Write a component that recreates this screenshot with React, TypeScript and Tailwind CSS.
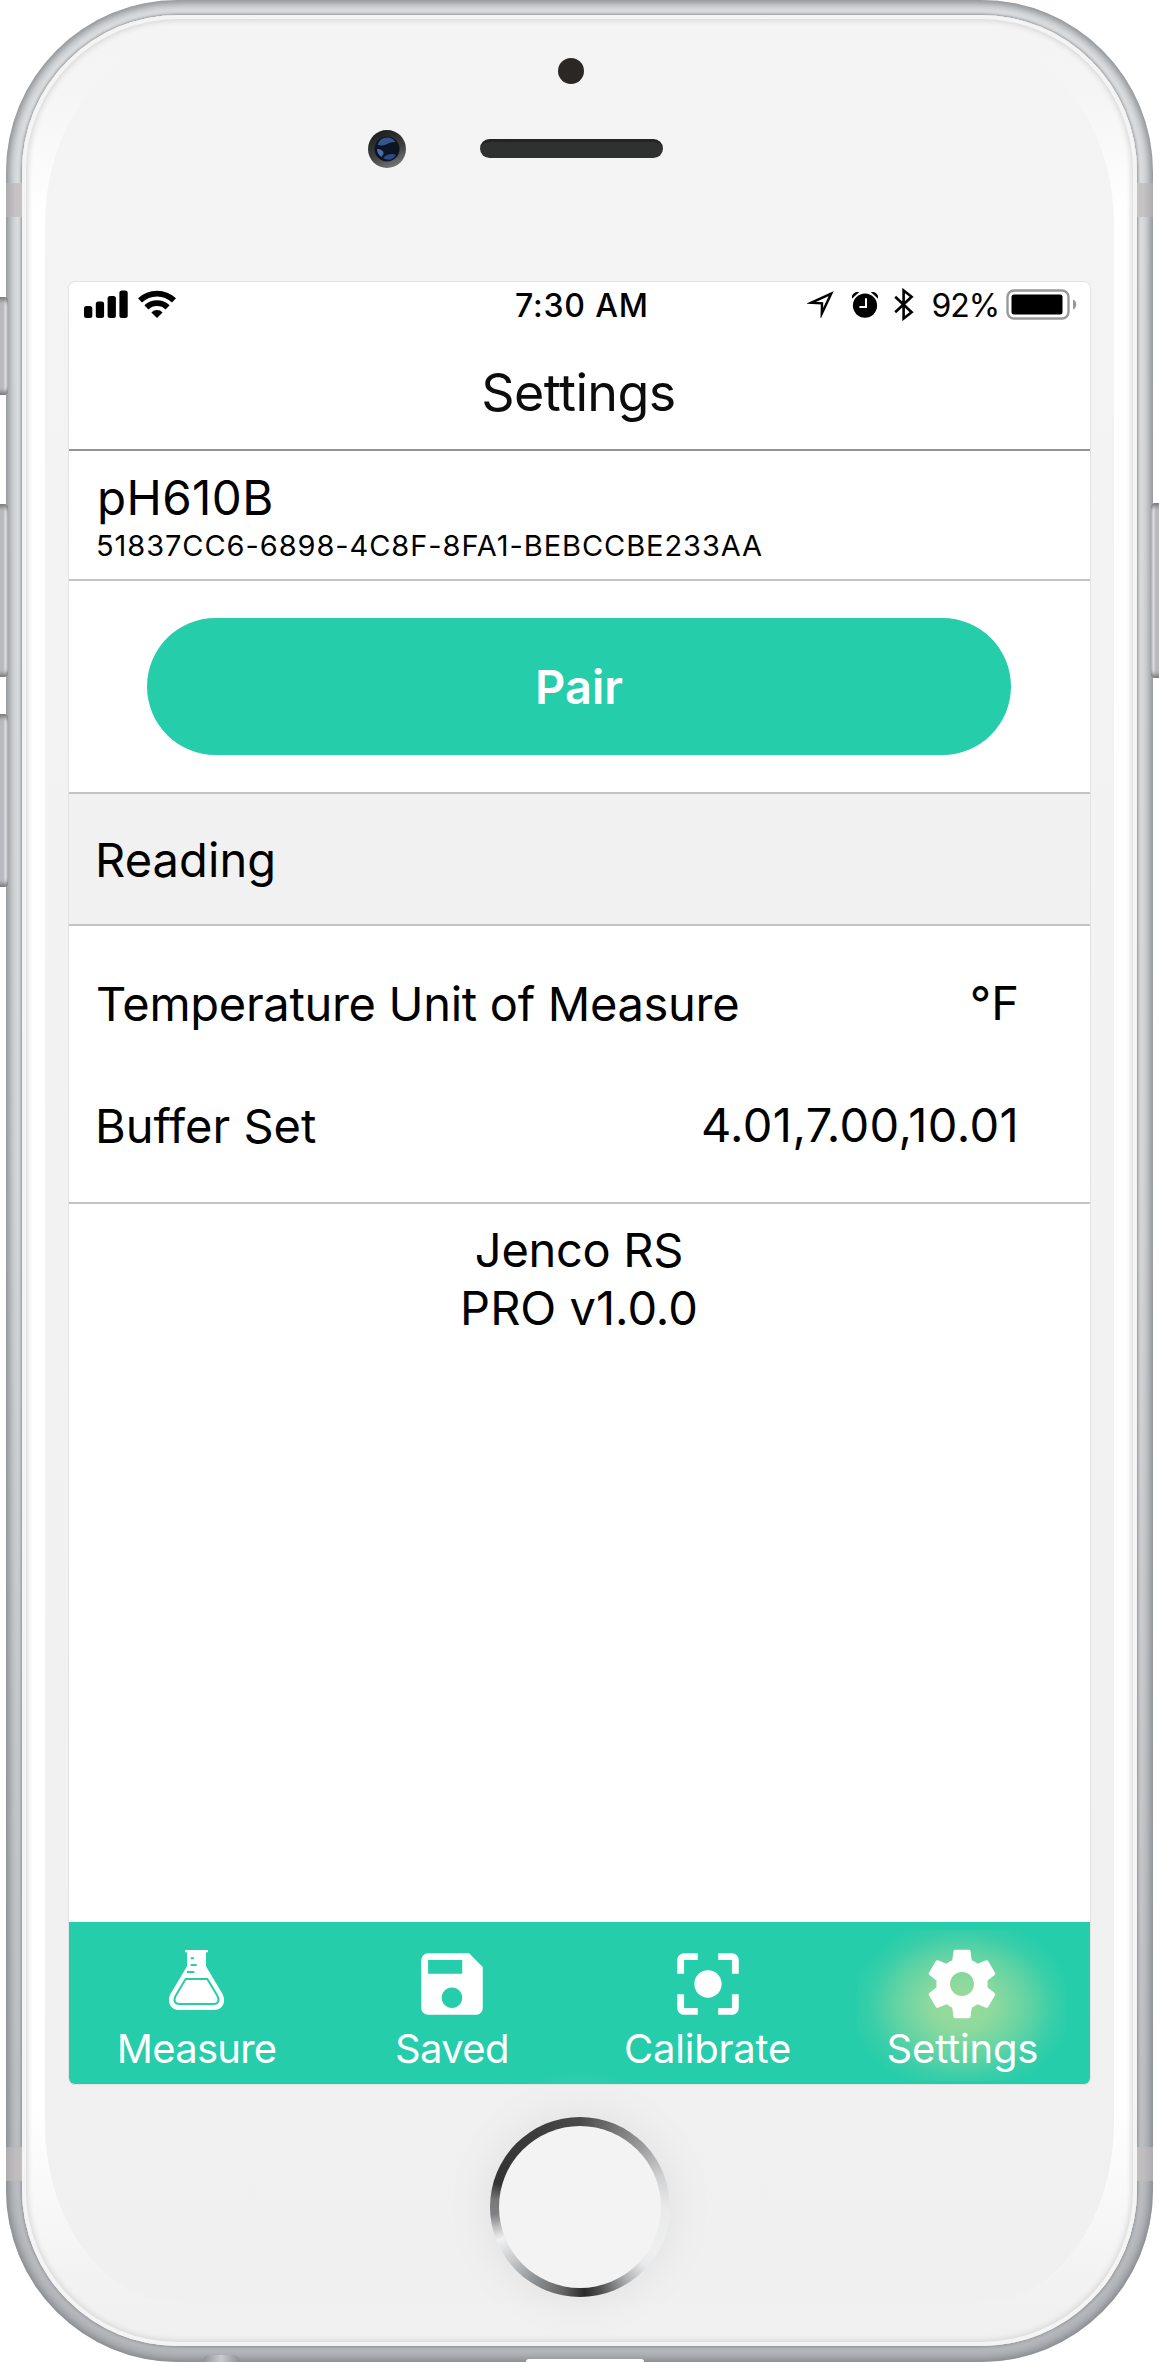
import React from 'react';
import { MdSave, MdCenterFocusStrong } from 'react-icons/md';

function SignalIcon() {
  return (
    <svg className="h-[28px] w-[44px]" viewBox="0 0 44 28" fill="#000">
      <rect x="0" y="16" width="8.3" height="12" rx="2.5" />
      <rect x="11.8" y="11.5" width="8.3" height="16.5" rx="2.5" />
      <rect x="23.6" y="6" width="8.3" height="22" rx="2.5" />
      <rect x="35.4" y="0.5" width="8.3" height="27.5" rx="2.5" />
    </svg>
  );
}

function WifiIcon() {
  return (
    <svg className="h-[28px] w-[38px]" viewBox="0 0 38 28" fill="none" stroke="#000" strokeWidth="5.8">
      <path d="M2 10.4a24.6 24.6 0 0 1 34 0" />
      <path d="M8.4 17.4a15.4 15.4 0 0 1 21.2 0" />
      <path d="M19 28l-5.6-5.6a8 8 0 0 1 11.2 0z" fill="#000" stroke="none" />
    </svg>
  );
}

function LocationIcon() {
  return (
    <svg className="h-[27px] w-[27px]" viewBox="0 0 27 27" fill="none" stroke="#000" strokeWidth="2.4">
      <path d="M24.2 2.6L4 11.8l11 .6-.2 10.2z" strokeMiterlimit="6" />
    </svg>
  );
}

function AlarmIcon() {
  return (
    <svg className="h-[26px] w-[26px]" viewBox="0 0 26 26">
      <circle cx="13" cy="13.6" r="12.1" fill="#000" />
      <path d="M0.4 5.6A5 5 0 0 1 5.8.6z" fill="#000" stroke="#000" strokeWidth="1.2" />
      <path d="M25.6 5.6A5 5 0 0 0 20.2.6z" fill="#000" stroke="#000" strokeWidth="1.2" />
      <path d="M14 6.2v8.8H7.4" fill="none" stroke="#fff" strokeWidth="2" />
    </svg>
  );
}

function BluetoothIcon() {
  return (
    <svg className="h-[33px] w-[20px]" viewBox="0 0 20 33" fill="none" stroke="#000" strokeWidth="2.6">
      <path d="M1.2 8.8l16.4 15.4-8 6.3V2.5l8 6.3L1.2 24.2" />
    </svg>
  );
}

function BatteryIcon() {
  return (
    <svg className="h-[31px] w-[71px]" viewBox="0 0 71 31">
      <rect x="1.5" y="1.5" width="61" height="28" rx="6.5" fill="none" stroke="#999" strokeWidth="2.4" />
      <rect x="5.5" y="5.5" width="51" height="20" rx="2.5" fill="#000" />
      <path d="M67 10.5c4.4 1.8 4.4 8.2 0 10z" fill="#999" />
    </svg>
  );
}

function FlaskIcon() {
  return (
    <svg className="h-[60px] w-[55px]" viewBox="0 0 165 180">
      <path
        fill="#fff"
        d="M48 0h69v7h-6v42l50 84c11 22 0 47-25 47H29C4 180-7 155 4 133l50-84V7h-6z"
      />
      <path
        fill="none"
        stroke="#26cdab"
        strokeWidth="6"
        d="M50 87h65l30 50c8 15 2 25-10 25H30c-12 0-18-10-10-25z"
      />
      <path stroke="#26cdab" strokeWidth="6" d="M65 25h10M65 45h18M54 66h22" />
    </svg>
  );
}

function GearIcon() {
  return (
    <svg className="size-[82px]" viewBox="0 0 24 24" fill="#fff">
      <path d="M19.43 12.98c.04-.32.07-.64.07-.98s-.03-.66-.07-.98l2.11-1.65c.19-.15.24-.42.12-.64l-2-3.46c-.12-.22-.39-.3-.61-.22l-2.49 1c-.52-.4-1.08-.73-1.69-.98l-.38-2.65C14.46 2.18 14.25 2 14 2h-4c-.25 0-.46.18-.49.42l-.38 2.65c-.61.25-1.17.59-1.69.98l-2.49-1c-.23-.09-.49 0-.61.22l-2 3.46c-.13.22-.07.49.12.64l2.11 1.65c-.04.32-.07.65-.07.98s.03.66.07.98l-2.11 1.65c-.19.15-.24.42-.12.64l2 3.46c.12.22.39.3.61.22l2.49-1c.52.4 1.08.73 1.69.98l.38 2.65c.03.24.24.42.49.42h4c.25 0 .46-.18.49-.42l.38-2.65c.61-.25 1.17-.59 1.69-.98l2.49 1c.23.09.49 0 .61-.22l2-3.46c.12-.22.07-.49-.12-.64l-2.11-1.65zM12 15.5c-1.93 0-3.5-1.57-3.5-3.5s1.57-3.5 3.5-3.5 3.5 1.57 3.5 3.5-1.57 3.5-3.5 3.5z" />
    </svg>
  );
}

function CameraLens() {
  return (
    <svg className="size-[38px]" viewBox="0 0 38 38">
      <defs>
        <linearGradient id="lens" x1="0.3" y1="0" x2="0.7" y2="1">
          <stop offset="0" stopColor="#1c1d1f" />
          <stop offset="0.55" stopColor="#3d3e40" />
          <stop offset="1" stopColor="#77797b" />
        </linearGradient>
      </defs>
      <circle cx="19" cy="19" r="19" fill="url(#lens)" />
      <circle cx="19" cy="19" r="12.5" fill="#0d1422" />
      <path d="M9.5 15a10 10 0 0 1 18-3c-6-1-10 5-18 3z" fill="#35558f" />
      <path d="M9 19c4 0 7 2 6.5 5l-2 3c-3-2-4.5-5-4.5-8z" fill="#4470b3" />
      <path d="M15 28c3-3.5 9-5 13-3-3 5-8 6-13 3z" fill="#2b4a86" />
    </svg>
  );
}

function Divider() {
  return <div className="h-[2px] shrink-0 bg-[#c3c4c4]" />;
}

function StatusBar() {
  return (
    <div className="flex h-[47px] shrink-0 items-center pr-[13px] pl-[15px]">
      <div className="flex w-[431px] items-center gap-[10px] pb-[3px]">
        <SignalIcon />
        <WifiIcon />
      </div>
      <div className="w-[160px] text-[32px] leading-none font-medium tracking-[0.8px]">7:30 AM</div>
      <div className="flex flex-1 items-center justify-end">
        <div className="pb-[2px]"><LocationIcon /></div>
        <div className="ml-[18px] pb-[2px]"><AlarmIcon /></div>
        <div className="ml-[16px] pb-[2px]"><BluetoothIcon /></div>
        <div className="ml-[18px] text-[32px] leading-none tracking-[-1.1px]">92%</div>
        <div className="ml-[7px] pb-[2px]"><BatteryIcon /></div>
      </div>
    </div>
  );
}

function SettingRow({ label, value, labelClass, valueClass }: { label: string; value: string; labelClass: string; valueClass: string }) {
  return (
    <div className="flex h-[122px] items-center justify-between pr-[71px] pl-[26px] text-[47px] leading-none">
      <span className={labelClass}>{label}</span>
      <span className={valueClass}>{value}</span>
    </div>
  );
}

function Tab({ icon, label, active, labelClass }: { icon: React.ReactNode; label: string; active?: boolean; labelClass: string }) {
  return (
    <div className="flex flex-1 justify-center pt-[8px]">
      <div
        className={
          active
            ? 'flex h-[151px] w-[210px] flex-col items-center bg-[radial-gradient(112px_88px_at_50%_50%,#9bdb9a_0%,#8ed99d_28%,#60d3a4_60%,#38cea9_82%,#26cdab_100%)]'
            : 'flex h-[151px] w-[210px] flex-col items-center'
        }
      >
        <div className="mt-[13px] flex h-[82px] items-center justify-center">{icon}</div>
        <div className={labelClass}>{label}</div>
      </div>
    </div>
  );
}

function Screen() {
  return (
    <div className="mx-auto flex h-[1802px] w-[1021px] shrink-0 flex-col overflow-hidden rounded-[6px] bg-white text-black shadow-[0_0_0_1px_#e3e3e3,0_1px_0_#9c9e9e]">
      <StatusBar />
      <div className="flex h-[120px] shrink-0 items-center justify-center pt-[8px] pr-[2px] text-[52px] leading-none tracking-[-0.6px] text-[#0c0c0c]">
        Settings
      </div>
      <div className="h-[2px] shrink-0 bg-[#939595]" />
      <div className="h-[128px] shrink-0 pt-[19px] pl-[27px]">
        <div className="pl-[1px] text-[47.5px] leading-[56px] tracking-[0.4px]">pH610B</div>
        <div className="text-[29px] leading-[39px] tracking-[0.93px]">51837CC6-6898-4C8F-8FA1-BEBCCBE233AA</div>
      </div>
      <Divider />
      <div className="flex h-[211px] shrink-0 items-center justify-center pr-px">
        <button className="h-[137px] w-[864px] rounded-full bg-[#26cdab] pb-[1px] text-[47px] leading-none font-semibold tracking-[0.1px] text-white">
          Pair
        </button>
      </div>
      <Divider />
      <div className="flex h-[130px] shrink-0 items-center bg-[#f1f1f1] pl-[26px] text-[47px] leading-none tracking-[0.1px]">
        Reading
      </div>
      <Divider />
      <div className="h-[276px] shrink-0 pt-[16px]">
        <SettingRow label="Temperature Unit of Measure" value="°F" labelClass="tracking-[-0.3px] pl-[1px]" valueClass="pb-[2px]" />
        <SettingRow label="Buffer Set" value="4.01,7.00,10.01" labelClass="tracking-[0px]" valueClass="pb-[2px] tracking-[0.4px]" />
      </div>
      <Divider />
      <div className="flex-1 pt-[17px] pr-px text-center text-[47px] leading-[58px]">
        <div className="tracking-[-0.3px]">Jenco RS</div>
        <div className="tracking-[0px]">PRO v1.0.0</div>
      </div>
      <nav className="flex h-[162px] shrink-0 bg-[#26cdab] text-[40px] leading-[48px] text-white">
        <Tab icon={<div className="pb-[8px]"><FlaskIcon /></div>} label="Measure" labelClass="tracking-[-0.74px]" />
        <Tab icon={<MdSave className="size-[82px]" />} label="Saved" labelClass="tracking-[-0.64px]" />
        <Tab icon={<div className="pl-[2px]"><MdCenterFocusStrong className="size-[82px]" /></div>} label="Calibrate" labelClass="pl-[1px] tracking-[-0.22px]" />
        <Tab icon={<GearIcon />} label="Settings" labelClass="tracking-[-0.2px]" active />
      </nav>
    </div>
  );
}

function Forehead() {
  return (
    <div className="relative h-[237px] shrink-0">
      <div className="absolute top-[13px] left-[513px] size-[26px] rounded-full bg-[#2b2724]" />
      <div className="absolute top-[85px] left-[323px]"><CameraLens /></div>
      <div className="absolute top-[94px] left-[435px] h-[19px] w-[183px] rounded-full border-t-[3px] border-[#252322] bg-[#2f3030]" />
    </div>
  );
}

function HomeButton() {
  return (
    <div className="mt-[33px] ml-[445px] size-[180px] rounded-full bg-[conic-gradient(#4a4a4b_0deg,#777_25deg,#9a9a9c_45deg,#d0d2d4_70deg,#e9e9ea_90deg,#eef0f0_120deg,#e8eaeb_132deg,#b0b2b4_147deg,#555_165deg,#2a2a2a_177deg,#666_192deg,#909497_213deg,#c8cacc_232deg,#f0f2f2_248deg,#bbb_257deg,#808184_265deg,#777_275deg,#333_286deg,#3c3c3d_330deg,#4a4a4b_360deg)] p-[9px] shadow-[0_0_36px_6px_#e3e3e3]">
      <div className="size-full rounded-full bg-[#f3f3f3]" />
    </div>
  );
}

function SideButtons() {
  return (
    <>
      <div className="absolute top-[297px] left-[-4px] h-[98px] w-[12px] rounded-[4px] bg-[linear-gradient(to_right,#b9babf_60%,#dfe0e3_80%,#c0c2c5)] shadow-[inset_0_5px_4px_-2px_#77797c,inset_0_-5px_4px_-2px_#77797c]" />
      <div className="absolute top-[504px] left-[-4px] h-[173px] w-[12px] rounded-[4px] bg-[linear-gradient(to_right,#b9babf_60%,#dfe0e3_80%,#c0c2c5)] shadow-[inset_0_5px_4px_-2px_#77797c,inset_0_-5px_4px_-2px_#77797c]" />
      <div className="absolute top-[714px] left-[-4px] h-[173px] w-[12px] rounded-[4px] bg-[linear-gradient(to_right,#b9babf_60%,#dfe0e3_80%,#c0c2c5)] shadow-[inset_0_5px_4px_-2px_#77797c,inset_0_-5px_4px_-2px_#77797c]" />
      <div className="absolute top-[503px] right-[-4px] h-[175px] w-[12px] rounded-[4px] bg-[linear-gradient(to_left,#b9babf_60%,#dfe0e3_80%,#c0c2c5)] shadow-[inset_0_5px_4px_-2px_#77797c,inset_0_-5px_4px_-2px_#77797c]" />
    </>
  );
}

function AntennaBands() {
  return (
    <>
      <div className="absolute top-[183px] left-0 h-[34px] w-[16px] bg-[linear-gradient(to_right,#adacae,#c6c3c5_60%)]" />
      <div className="absolute top-[183px] right-0 h-[34px] w-[16px] bg-[linear-gradient(to_left,#adacae,#c6c3c5_60%)]" />
      <div className="absolute top-[2147px] left-0 h-[34px] w-[16px] bg-[linear-gradient(to_right,#adacae,#c0bdbf_60%)]" />
      <div className="absolute top-[2147px] right-0 h-[34px] w-[16px] bg-[linear-gradient(to_left,#adacae,#c0bdbf_60%)]" />
    </>
  );
}

export default function App() {
  return (
    <div className="relative h-[2362px] w-[1159px] overflow-hidden bg-white font-['Inter',sans-serif]">
      <div className="relative mx-[6px] h-[2362px] rounded-[172px] bg-[linear-gradient(to_bottom,#dcdee0,#d6d8da_50%,#bcbec2_92%,#b4b6ba)] px-[16px] pt-[15px] pb-[16px] shadow-[inset_0_0_8px_3px_#7f8488]">
        <AntennaBands />
        <div className="h-full rounded-[156px] bg-[linear-gradient(to_bottom,#f4f4f4_0px,#f5f5f5_80px,#fff_200px,#fff_2090px,#f2f2f2_2270px,#f0f0f0)] px-[23px] pt-[30px] pb-[43px] shadow-[0_0_3px_1px_#8c8f94,inset_0_0_0_4px_#f4f4f4,inset_0_0_5px_6px_#dadada]">
          <div className="flex h-full flex-col rounded-[135px/180px] bg-[linear-gradient(to_bottom,#f4f4f4,#f0f0f0)]">
            <Forehead />
            <Screen />
            <HomeButton />
          </div>
        </div>
        <div className="absolute bottom-0 left-[196px] h-[7px] w-[38px] rounded-t-full bg-[linear-gradient(to_right,#8d8f93,#c9cad0,#8d8f93)]" />
        <div className="absolute bottom-0 left-[520px] h-[3px] w-[118px] rounded-t-[6px] bg-white" />
      </div>
      <SideButtons />
    </div>
  );
}
